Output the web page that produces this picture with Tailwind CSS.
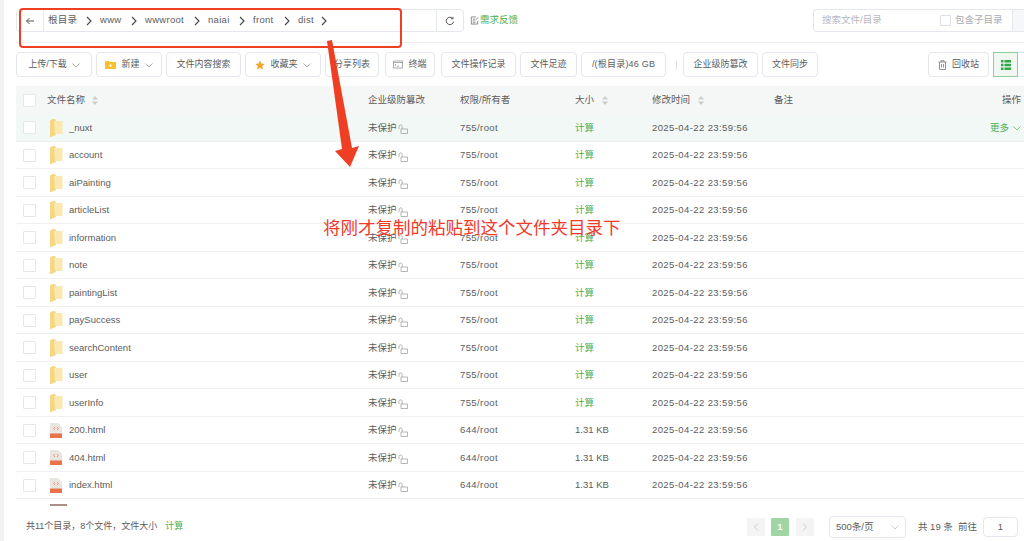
<!DOCTYPE html>
<html lang="zh-CN">
<head>
    <meta charset="UTF-8">
    <title>文件管理</title>
    <script src="https://cdn.jsdelivr.net/npm/@tailwindcss/browser@4"></script>
</head>
<body class="bg-white">
<div class="relative w-[1024px] h-[541px] overflow-hidden flex text-[9.500px] text-[#5c5c5c] font-['Liberation_Sans','Noto_Sans_CJK_SC',sans-serif]">
    <!-- left gutter -->
    <div class="w-1 shrink-0 bg-[#f3f3f3]"></div>

    <div class="flex-1 flex flex-col pl-3 min-w-0">
        <!-- path bar -->
        <div class="h-[43px] shrink-0 flex items-start pt-[9px] border-b border-[#eeeeee]">
            <div class="w-[448px] h-[23px] flex items-center border border-[#e4e7ed] rounded-sm">
                <div class="w-[27px] h-full flex items-center justify-center border-r border-[#e4e7ed]">
                    <svg class="w-[10px] h-[10px]" viewBox="0 0 10 10" fill="none" stroke="#555" stroke-width="1"><path d="M9 5H1.500M4.500 2L1.500 5l3 3"/></svg>
                </div>
                <div id="crumbs" class="flex-1 h-full flex items-center pl-[4px] tracking-[0.3px]"></div>
                <div class="w-[27px] h-full flex items-center justify-center border-l border-[#e4e7ed]">
                    <svg class="w-[10px] h-[10px]" viewBox="0 0 10 10" fill="none" stroke="#555" stroke-width="1"><path d="M8.600 5.600A3.700 3.700 0 1 1 7.600 2.300M8 .8v2H6"/></svg>
                </div>
            </div>
            <div class="ml-[6px] h-[23px] flex items-center gap-[1px] text-[#4cae50]">
                <svg class="w-[9px] h-[9px]" viewBox="0 0 10 10" fill="none" stroke="#777" stroke-width="0.9"><path d="M8.500 5.500V9h-7V1h5M3 3.500h3M3 5.500h3M3 7.500h3M7 4l2-2.500"/></svg>
                <span>需求反馈</span>
            </div>
            <div class="ml-auto mr-0 w-[211px] h-[23px] flex items-center border border-[#e4e7ed] border-r-0 rounded-l-sm">
                <span class="pl-2 text-[#b5b8bf] w-[126px] shrink-0">搜索文件/目录</span>
                <span class="w-[11px] h-[11px] border border-[#dcdfe6] rounded-[1px] shrink-0"></span>
                <span class="ml-1 text-[#a8abb2]">包含子目录</span>
                <span class="ml-auto w-3 h-full bg-[#f5f7fa] border-l border-[#e4e7ed]"></span>
            </div>
        </div>

        <!-- toolbar -->
        <div class="h-[25px] mt-[9px] shrink-0 flex items-center text-[9px]">
            <div class="w-[76px] h-full flex items-center justify-center gap-[5px] border border-[#e4e7ed] rounded-sm">上传/下载<svg class="w-2 h-2" viewBox="0 0 8 8" fill="none" stroke="#888" stroke-width="0.7"><path d="M.5 2.500L4 6l3.500-3.500"/></svg></div>
            <div class="w-[66px] ml-1 h-full flex items-center justify-center gap-[5px] border border-[#e4e7ed] rounded-sm">
                <svg class="w-[11px] h-[9px]" viewBox="0 0 11 9"><path d="M0 1h4l1 1h6v7H0z" fill="#fbc02d"/><path d="M4 5.500h3M5.500 4v3" stroke="#fff" stroke-width="0.8"/></svg>新建<svg class="w-2 h-2" viewBox="0 0 8 8" fill="none" stroke="#888" stroke-width="0.7"><path d="M.5 2.500L4 6l3.500-3.500"/></svg>
            </div>
            <div class="w-[75px] ml-1 h-full flex items-center justify-center border border-[#e4e7ed] rounded-sm">文件内容搜索</div>
            <div class="w-[76px] ml-1 h-full flex items-center justify-center gap-[5px] border border-[#e4e7ed] rounded-sm">
                <svg class="w-[10px] h-[10px]" viewBox="0 0 10 10"><path d="M5 .5l1.400 3 3.300.4-2.400 2.200.6 3.300L5 7.800 2.100 9.400l.6-3.300L.3 3.900l3.300-.4z" fill="#f0a92e"/></svg>收藏夹<svg class="w-2 h-2" viewBox="0 0 8 8" fill="none" stroke="#888" stroke-width="0.7"><path d="M.5 2.500L4 6l3.500-3.500"/></svg>
            </div>
            <div class="w-[54px] ml-1 h-full flex items-center justify-center border border-[#e4e7ed] rounded-sm">分享列表</div>
            <div class="w-[50px] ml-[6px] h-full flex items-center justify-center gap-[5px] border border-[#e4e7ed] rounded-sm">
                <svg class="w-[10px] h-[9px]" viewBox="0 0 10 9" fill="none" stroke="#888" stroke-width="0.7"><path d="M.5 1h9v7h-9zM.5 2.500h9M2 4l1 1-1 1M4 6.200h2"/></svg>终端
            </div>
            <div class="w-[75px] ml-[6px] h-full flex items-center justify-center border border-[#e4e7ed] rounded-sm">文件操作记录</div>
            <div class="w-[57px] ml-1 h-full flex items-center justify-center border border-[#e4e7ed] rounded-sm">文件足迹</div>
            <div class="w-[85px] ml-1 h-full flex items-center justify-center border border-[#e4e7ed] rounded-sm tracking-[0.2px]">/(根目录)46 GB</div>
            <div class="w-px h-2 ml-[10px] bg-[#dddddd]"></div>
            <div class="w-[75px] ml-[6px] h-full flex items-center justify-center border border-[#e4e7ed] rounded-sm">企业级防篡改</div>
            <div class="w-[56px] ml-1 h-full flex items-center justify-center border border-[#e4e7ed] rounded-sm">文件同步</div>
            <div class="w-[61px] ml-auto h-full flex items-center justify-center gap-[5px] border border-[#e4e7ed] rounded-sm">
                <svg class="w-[9px] h-[10px]" viewBox="0 0 9 10" fill="none" stroke="#777" stroke-width="0.8"><path d="M.5 2h8M3 2V.7h3V2M1.500 2v7.500h6V2M3.500 4v3.500M5.500 4v3.500"/></svg>回收站
            </div>
            <div class="w-[25px] ml-1 h-full flex items-center justify-center border border-[#8fce9a] bg-[#f0f8f1]">
                <svg class="w-[10px] h-[10px]" viewBox="0 0 10 10" fill="#2fa84a"><path d="M0 0h2.500v2.500H0zM3.500 0H10v2.500H3.500zM0 3.700h2.500v2.600H0zM3.500 3.700H10v2.600H3.500zM0 7.500h2.500V10H0zM3.500 7.500H10V10H3.500z"/></svg>
            </div>
            <div class="w-[6px] h-full border-y border-[#e4e7ed]"></div>
        </div>

        <!-- table -->
        <div class="mt-[9px] h-[420px] shrink-0 overflow-hidden">
            <div class="h-[28px] grid grid-cols-[34px_318px_92px_115px_77px_122px_1fr] items-center bg-[#f5f6f6]">
                <span class="ml-[7px] w-[13px] h-[13px] bg-white border border-[#e4e7ed] rounded-[1px]"></span>
                <span class="-ml-[3px] flex items-center gap-[7px]">文件名称<svg class="w-[6px] h-[9px]" viewBox="0 0 6 9" fill="#ccc"><path d="M3 0l3 3.500H0zM3 9L0 5.500h6z"/></svg></span>
                <span>企业级防篡改</span>
                <span>权限/所有者</span>
                <span class="flex items-center gap-[8px]">大小<svg class="w-[6px] h-[9px]" viewBox="0 0 6 9" fill="#ccc"><path d="M3 0l3 3.500H0zM3 9L0 5.500h6z"/></svg></span>
                <span class="flex items-center gap-[8px]">修改时间<svg class="w-[6px] h-[9px]" viewBox="0 0 6 9" fill="#ccc"><path d="M3 0l3 3.500H0zM3 9L0 5.500h6z"/></svg></span>
                <span class="flex justify-between pr-[3px]"><span>备注</span><span>操作</span></span>
            </div>
            <div id="rows"></div>
        </div>

        <!-- footer -->
        <div class="flex-1 flex items-center pl-[10px] pt-[7px]">
            <span class="text-[9px]">共11个目录，8个文件，文件大小</span>
            <span class="ml-2 text-[9px] text-[#4cae50]">计算</span>
            <div class="ml-auto flex items-center">
                <span class="w-[18px] h-[18px] flex items-center justify-center bg-[#f4f4f5]"><svg class="w-[6px] h-2" viewBox="0 0 6 8" fill="none" stroke="#bbb" stroke-width="0.7"><path d="M5 .5L1.500 4 5 7.500"/></svg></span>
                <span class="ml-[6px] w-[18px] h-[18px] flex items-center justify-center bg-[#a0d5a4] text-white font-bold rounded-[1px]">1</span>
                <span class="ml-[7px] w-[18px] h-[18px] flex items-center justify-center bg-[#f4f4f5]"><svg class="w-[6px] h-2" viewBox="0 0 6 8" fill="none" stroke="#bbb" stroke-width="0.7"><path d="M1 .5L4.500 4 1 7.500"/></svg></span>
                <span class="ml-[15px] w-[77px] h-[22px] flex items-center justify-between px-[6px] border border-[#e4e7ed] rounded-sm">500条/页<svg class="w-2 h-2" viewBox="0 0 8 8" fill="none" stroke="#bbb" stroke-width="0.7"><path d="M.5 2.500L4 6l3.500-3.500"/></svg></span>
                <span class="ml-3 w-[34px] whitespace-nowrap">共 19 条</span>
                <span class="ml-[6px] whitespace-nowrap">前往</span>
                <span class="ml-[6px] mr-[6px] w-[35px] h-[20px] flex items-center justify-center border border-[#e4e7ed] rounded-sm">1</span>
            </div>
        </div>
    </div>

    <!-- annotations drawn on the screenshot -->
    <div class="absolute left-[19px] top-[8px] w-[383px] h-[40px] border-2 border-[#ee3f24] rounded-[4px]"></div>
    <svg class="absolute left-0 top-0 w-[1024px] h-[541px] pointer-events-none" viewBox="0 0 1024 541">
        <path d="M327 41L332 40L352 148L359 146L350 167L335 151L342 149Z" fill="#ee3f24"/>
    </svg>
    <div class="absolute left-[323px] top-[216px] text-[17.500px] leading-6 text-[#ee3b2a] whitespace-nowrap">将刚才复制的粘贴到这个文件夹目录下</div>
</div>

<script>
    const chevron = '<svg class="w-2 h-[10px] mr-[7px]" viewBox="0 0 8 10" fill="none" stroke="#444" stroke-width="1.100"><path d="M2 1l4 4-4 4"/></svg>';
    const parts = [['根目录', 52], ['www', 45], ['wwwroot', 63], ['naiai', 45], ['front', 45], ['dist', 37]];
    document.getElementById('crumbs').innerHTML = parts.map(([name, w]) =>
        `<span class="flex items-center justify-between shrink-0 whitespace-nowrap" style="width:${w}px"><span>${name}</span>${chevron}</span>`
    ).join('');

    const folder = '<svg class="w-[13px] h-[18px]" viewBox="0 0 13 18"><path d="M0 1.500L3 0h2l1 2v14l-5 2H0z" fill="#f5d682"/><path d="M4 2h8.500v13H5z" fill="#fbe8b0"/></svg>';
    const html = '<svg class="w-[12px] h-[15px]" viewBox="0 0 12 15"><path d="M0 0h8l4 4v11H0z" fill="#e8e6de"/><path d="M0 10.500h12V15H0z" fill="#e8734d"/><path d="M5 4L3.500 5.500 5 7M7 4l1.500 1.500L7 7" fill="none" stroke="#e8734d" stroke-width="0.7"/></svg>';
    const lock = '<svg class="w-[10px] h-[10px] ml-[1px] mt-[3px]" viewBox="0 0 10 10" fill="none" stroke="#999" stroke-width="0.7"><path d="M3 5h6.500v4.500H3zM1 5V2.500a1.600 1.600 0 0 1 3.200 0V5"/></svg>';

    const folders = ['_nuxt', 'account', 'aiPainting', 'articleList', 'information', 'note', 'paintingList', 'paySuccess', 'searchContent', 'user', 'userInfo'];
    const files = ['200.html', '404.html', 'index.html'];

    const row = (name, isDir, i) => `
        <div class="h-[27.500px] pt-px grid grid-cols-[34px_318px_92px_115px_77px_122px_1fr] items-center border-b border-[#f0f0f0] ${i === 0 ? 'bg-[#f1f8f5]' : ''}">
            <span class="ml-[7px] w-[13px] h-[13px] bg-white border border-[#e4e7ed] rounded-[1px]"></span>
            <span class="flex items-center"><span class="w-[19px]">${isDir ? folder : html}</span>${name}</span>
            <span class="flex items-center">未保护${lock}</span>
            <span class="tracking-[0.4px]">${isDir ? '755/root' : '644/root'}</span>
            <span class="${isDir ? 'text-[#4cae50]' : ''}">${isDir ? '计算' : '1.31 KB'}</span>
            <span class="tracking-[0.4px]">2025-04-22 23:59:56</span>
            <span class="flex justify-end items-center gap-1 pr-[3px] text-[#4cae50]">${i === 0 ? '更多<svg class="w-2 h-2" viewBox="0 0 8 8" fill="none" stroke="#4cae50" stroke-width="0.7"><path d="M.5 2.500L4 6l3.500-3.500"/></svg>' : ''}</span>
        </div>`;

    document.getElementById('rows').innerHTML =
        folders.map((n, i) => row(n, true, i)).join('') +
        files.map((n, i) => row(n, false, i + 11)).join('') +
        '<div class="h-[7px] pt-[5px] pl-[34px]"><div class="w-[17px] h-[2px] bg-[#a98f86]"></div></div>';
</script>
</body>
</html>
